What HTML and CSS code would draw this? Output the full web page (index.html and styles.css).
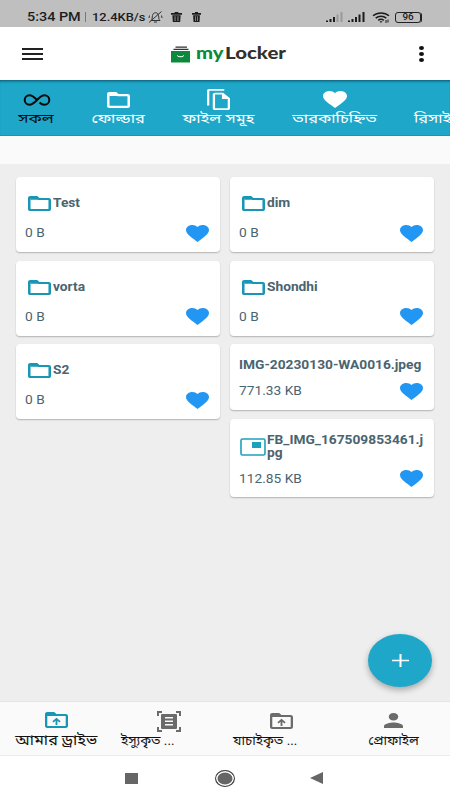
FILE: index.html
```html
<!DOCTYPE html>
<html lang="bn">
<head>
  <meta charset="UTF-8">
  <meta name="viewport" content="width=device-width, initial-scale=1.0">
  <title>myLocker</title>
  <link rel="stylesheet" href="styles.css">
</head>
<body>
  <svg class="sprite">
    <symbol id="folder" viewBox="2 4 20 16" preserveAspectRatio="none"><path d="M9.170 6.200l2 2H19.800v9.600H4.200V6.200h4.970M10 4H4c-1.100 0-1.990.9-1.990 2L2 18c0 1.100.9 2 2 2h16c1.100 0 2-.9 2-2V8c0-1.100-.9-2-2-2h-8l-2-2z"/><path d="M4 5h6l2 3H4z"/></symbol>
    <symbol id="upload" viewBox="2 4 20 16" preserveAspectRatio="none"><path d="M20 6h-8l-2-2H4c-1.100 0-1.990.9-1.990 2L2 18c0 1.100.9 2 2 2h16c1.100 0 2-.9 2-2V8c0-1.100-.9-2-2-2zm0 12H4V8h16v10z"/><path d="M11.200 17h1.600v-4.300l1.700 1.700 1.100-1.100L12 9.700l-3.600 3.600 1.100 1.100 1.700-1.700z"/></symbol>
    <symbol id="heart" viewBox="2 3 20 18.35" preserveAspectRatio="none"><path d="M12 21.35l-1.45-1.32C5.4 15.36 2 12.28 2 8.5 2 5.42 4.42 3 7.5 3c1.74 0 3.41.81 4.5 2.09C13.09 3.81 14.76 3 16.5 3 19.58 3 22 5.42 22 8.5c0 3.78-3.4 6.86-8.55 11.54L12 21.35z"/></symbol>
    <symbol id="trash" viewBox="0 0 12 11" preserveAspectRatio="none"><path d="M4 0h4v1h4v2H0V1h4zM1.5 3.5h9L10 11H2zM4 4.800v5h.8v-5zm3.200 0v5H8v-5z" fill-rule="evenodd"/></symbol>
  </svg>

  <div class="status-bar">
    <span class="clock"><span class="wide">5:34 PM</span></span>
    <span class="divider"></span>
    <span class="speed"><span class="wide">12.4KB/s</span></span>
    <svg class="bell" viewBox="0 0 14 12"><path d="M2.500 9.500h9C10 8.300 10.500 6.500 10 4.500 9.500 2.300 8.500 1.800 7 1.800S4.500 2.300 4 4.500C3.500 6.500 4 8.300 2.500 9.500M5.500 11h3M.5 11.500l12.500-11M1 4.500L.5 7M13 4.500l.5 2.500"/></svg>
    <svg class="trash"><use href="#trash"/></svg>
    <svg class="trash small"><use href="#trash"/></svg>
    <div class="status-right">
      <svg class="signal" viewBox="0 0 17 10"><path d="M0 8.500h2V10H0zM3.500 7h2v3h-2zM7 5h2v5H7z"/><path class="weak" d="M10.500 2.500h2V10h-2zM14.500 0h2v10h-2z"/></svg>
      <svg class="signal second" viewBox="0 0 17 10"><path d="M0 8.500h2V10H0zM3.500 7h2v3h-2zM7 5h2v5H7zM10.500 2.500h2V10h-2zM14.500 0h2v10h-2z"/></svg>
      <svg class="wifi" viewBox="0 0 18 11"><path d="M1 3.800C5.500-.1 12.500-.1 17 3.800M3.700 6.200c3-2.500 7.600-2.500 10.600 0M6.200 8.300c1.700-1.300 3.900-1.300 5.600 0"/><path class="dot" d="M7.500 9.200h3L9 11zM13.500 8h1v3h-1zM15.500 7.500h1v3h-1z"/></svg>
      <span class="battery"><span>96</span></span>
    </div>
  </div>

  <header class="app-bar">
    <div class="menu"><i></i><i></i><i></i></div>
    <svg class="logo" viewBox="0 0 118 24">
      <path class="dark" d="M5.500 4.500h11.500v1.200H5.500zM3.500 6.800h15v1.300h-15z"/>
      <path class="green" d="M1 9h19v11.500H1z"/>
      <path class="slot" d="M7.500 13.300q0 1.400 1.500 1.400h3q1.500 0 1.500-1.400"/>
      <text class="green" x="26" y="16.500" textLength="27.500" lengthAdjust="spacingAndGlyphs">my</text>
      <text class="dark" x="55" y="16.500" textLength="61" lengthAdjust="spacingAndGlyphs">Locker</text>
    </svg>
    <div class="more"><i></i><i></i><i></i></div>
  </header>

  <nav class="tabs">
    <div class="tab all active">
      <svg class="infinity" viewBox="0 0 28 12"><path d="M14 6C10 1.800 8.500 1.200 6.500 1.200a4.800 4.800 0 0 0 0 9.600c2 0 3.500-.6 7.500-4.800s5.500-4.800 7.500-4.800a4.800 4.800 0 0 1 0 9.600c-2 0-3.300-.6-5-2.300"/></svg>
      <span class="wide">সকল</span>
    </div>
    <div class="tab folders">
      <svg class="folder"><use href="#folder"/></svg>
      <span class="wide">ফোল্ডার</span>
    </div>
    <div class="tab files">
      <svg class="copy" viewBox="1 0 20 23" preserveAspectRatio="none"><path d="M16 0H3C1.900 0 1 .9 1 2v16h2V2h13V0zm-1 4l6 6v11c0 1.100-.9 2-2 2H7.990C6.890 23 6 22.100 6 21l.01-15c0-1.100.89-2 1.990-2h7zM14 11V6H8v15h11V11h-5z" fill-rule="evenodd"/></svg>
      <span class="wide">ফাইল সমূহ</span>
    </div>
    <div class="tab starred">
      <svg class="heart"><use href="#heart"/></svg>
      <span class="wide">তারকাচিহ্নিত</span>
    </div>
    <div class="tab recycle">
      <span class="wide">রিসাইকেল</span>
    </div>
  </nav>
  <div class="strip"></div>

  <main class="files-grid">
    <div class="column">
      <div class="card">
        <div class="name"><svg class="folder"><use href="#folder"/></svg><span class="wide">Test</span></div>
        <div class="meta"><span class="wide">0 B</span><svg class="heart"><use href="#heart"/></svg></div>
      </div>
      <div class="card">
        <div class="name"><svg class="folder"><use href="#folder"/></svg><span class="wide">vorta</span></div>
        <div class="meta"><span class="wide">0 B</span><svg class="heart"><use href="#heart"/></svg></div>
      </div>
      <div class="card">
        <div class="name"><svg class="folder"><use href="#folder"/></svg><span class="wide">S2</span></div>
        <div class="meta"><span class="wide">0 B</span><svg class="heart"><use href="#heart"/></svg></div>
      </div>
    </div>
    <div class="column">
      <div class="card">
        <div class="name"><svg class="folder"><use href="#folder"/></svg><span class="wide">dim</span></div>
        <div class="meta"><span class="wide">0 B</span><svg class="heart"><use href="#heart"/></svg></div>
      </div>
      <div class="card">
        <div class="name"><svg class="folder"><use href="#folder"/></svg><span class="wide">Shondhi</span></div>
        <div class="meta"><span class="wide">0 B</span><svg class="heart"><use href="#heart"/></svg></div>
      </div>
      <div class="card plain">
        <div class="name"><span class="wide">IMG-20230130-WA0016.jpeg</span></div>
        <div class="meta"><span class="wide">771.33 KB</span><svg class="heart"><use href="#heart"/></svg></div>
      </div>
      <div class="card image">
        <div class="name">
          <svg class="picture" viewBox="0 0 26 18"><rect class="frame" x="1" y="1" width="24" height="16" rx="1.500"/><path d="M12 4h9v6h-9z"/></svg>
          <span class="wide">FB_IMG_167509853461.j<br>pg</span>
        </div>
        <div class="meta"><span class="wide">112.85 KB</span><svg class="heart"><use href="#heart"/></svg></div>
      </div>
    </div>
    <button class="fab"><svg viewBox="0 0 17 13"><path d="M7.500 0h2v5.750h7.500v1.500H9.500V13h-2V7.250H0v-1.500h7.500z"/></svg></button>
  </main>

  <nav class="bottom-nav">
    <div class="item active">
      <svg class="folder"><use href="#upload"/></svg>
      <span class="wide">আমার ড্রাইভ</span>
    </div>
    <div class="item clipped">
      <svg class="scan" viewBox="0 0 24 21"><path d="M0 0h5v2H2v3H0zM19 0h5v5h-2V2h-3zM0 16h2v3h3v2H0zM22 16h2v5h-5v-2h3z"/><path d="M5 3h14q1 0 1 1v13q0 1-1 1H5q-1 0-1-1V4q0-1 1-1zM8 6v1.500h8V6zM8 9.500V11h8V9.500zM8 13v1.500h8V13z" fill-rule="evenodd"/></svg>
      <span class="wide">ইস্যুকৃত ...</span>
    </div>
    <div class="item clipped">
      <svg class="folder"><use href="#upload"/></svg>
      <span class="wide">যাচাইকৃত ...</span>
    </div>
    <div class="item">
      <svg class="person" viewBox="4 4 16 16" preserveAspectRatio="none"><path d="M12 12c2.210 0 4-1.790 4-4s-1.790-4-4-4-4 1.790-4 4 1.790 4 4 4zm0 2c-2.670 0-8 1.340-8 4v2h16v-2c0-2.660-5.330-4-8-4z"/></svg>
      <span class="wide">প্রোফাইল</span>
    </div>
  </nav>

  <div class="system-nav">
    <span class="recent"></span>
    <span class="home"></span>
    <span class="back"></span>
  </div>
</body>
</html>
```
FILE: styles.css
```css
* {
  box-sizing: border-box;
}
body {
  margin: 0;
  width: 450px;
  height: 800px;
  overflow: hidden;
  display: flex;
  flex-direction: column;
  font-family: Roboto, "Noto Sans Bengali", "Noto Sans", sans-serif;
  background: #eee;
}
svg {
  display: block;
  fill: currentColor;
  flex-shrink: 0;
}
.sprite {
  position: absolute;
  width: 0;
  height: 0;
}
.wide {
  display: inline-block;
  white-space: nowrap;
  transform: scaleX(1.2);
  transform-origin: left center;
}

/* status bar */
.status-bar {
  height: 27px;
  flex-shrink: 0;
  display: flex;
  align-items: center;
  padding: 7px 26px 0 27px;
  background: #bfbfbf;
  color: #1c1c1c;
}
.clock {
  width: 58px;
  font-size: 12px;
  font-weight: 500;
}
.divider {
  width: 1px;
  height: 10px;
  background: #777;
}
.speed {
  width: 62px;
  padding-left: 6px;
  font-size: 11px;
  font-weight: 500;
}
.speed .wide {
  transform: scaleX(1.17);
}
.bell {
  width: 15px;
  height: 12px;
  fill: none;
  stroke: #333;
}
.trash {
  width: 11px;
  height: 10px;
  margin-left: 8px;
}
.trash.small {
  width: 9px;
  margin-left: 10px;
}
.status-right {
  display: flex;
  align-items: center;
  margin-left: auto;
}
.signal {
  width: 17px;
  height: 10px;
}
.signal.second {
  margin-left: 5px;
}
.signal .weak {
  fill: #999;
}
.wifi {
  width: 18px;
  height: 11px;
  margin: 0 5px 0 7px;
  fill: none;
  stroke: #1c1c1c;
  stroke-width: 1.5;
}
.wifi .dot {
  fill: #1c1c1c;
  stroke: none;
}
.battery {
  width: 26px;
  height: 11px;
  margin-right: 3px;
  border: 1px solid #222;
  border-radius: 3px;
  font-size: 9px;
  font-weight: 500;
  line-height: 9.5px;
  text-align: center;
  box-shadow: 1.5px 0 0 -0.5px #222;
}
.battery span {
  display: inline-block;
  transform: scaleX(1.1);
}

/* app bar */
.app-bar {
  height: 53px;
  flex-shrink: 0;
  display: flex;
  align-items: center;
  padding: 0 26px 0 22px;
  background: #fff;
}
.menu {
  width: 21px;
  display: grid;
  gap: 3px;
}
.menu i {
  height: 2px;
  background: #222;
}
.logo {
  width: 118px;
  height: 24px;
  margin-left: 127px;
  font-family: Lato, sans-serif;
  font-size: 17px;
  font-weight: 900;
}
.logo .green {
  fill: #0c8a3c;
}
.logo .dark {
  fill: #2f3132;
}
.logo .slot {
  fill: none;
  stroke: #fff;
}
.more {
  display: grid;
  gap: 2px;
  margin-left: auto;
}
.more i {
  width: 5px;
  height: 4px;
  border-radius: 50%;
  background: #111;
}

/* tabs */
.tabs {
  height: 56px;
  flex-shrink: 0;
  display: flex;
  overflow: hidden;
  background: #1fa7c9;
  border-bottom: 1px solid #1a93b8;
  box-shadow: inset 0 3px 3px -2px #08516a;
  color: #fff;
}
.tab {
  flex-shrink: 0;
  height: 56px;
  display: flex;
  flex-direction: column;
  align-items: center;
  justify-content: flex-end;
  padding-bottom: 8px;
  font-size: 13px;
}
.tab .wide {
  transform: scaleX(1.26);
  transform-origin: center;
  line-height: 18px;
}
.tab.all {
  width: 73px;
}
.tab.folders {
  width: 91px;
}
.tab.files {
  width: 109px;
}
.tab.starred {
  width: 124px;
}
.tab.recycle {
  width: 103px;
}
.tab.active {
  color: #0a0a0a;
  border-bottom: 1px solid #1a84d8;
  padding-bottom: 7px;
}
.infinity {
  width: 28px;
  height: 12px;
  margin-bottom: 4px;
  fill: none;
  stroke: currentColor;
  stroke-width: 2;
}
.tab .folder {
  width: 23px;
  height: 16px;
  margin-bottom: 2px;
}
.copy {
  width: 23px;
  height: 21px;
}
.tab .heart {
  width: 24px;
  height: 17px;
  margin-bottom: 2px;
}
.strip {
  height: 28px;
  flex-shrink: 0;
  background: #fafafa;
}

/* file cards */
.files-grid {
  flex: 1;
  display: flex;
  gap: 10px;
  padding: 13px 16px 0;
  position: relative;
}
.column {
  width: 204px;
  display: flex;
  flex-direction: column;
  gap: 8.6px;
}
.card {
  height: 75px;
  padding: 17px 11px 0 9px;
  border-radius: 4px;
  background: #fff;
  box-shadow: 0 1px 1.5px rgba(0, 0, 0, 0.25);
  color: #4a6470;
}
.card .wide {
  transform: scaleX(1.145);
}
.card .name .wide {
  position: relative;
  top: 1px;
}
.card .name {
  height: 18px;
  display: flex;
  align-items: center;
  font-size: 12px;
  line-height: 13.5px;
  font-weight: 700;
}
.card .folder {
  width: 23px;
  height: 15px;
  margin: 1px 2px 0 3px;
  color: #1797b5;
}
.card .meta {
  height: 18px;
  display: flex;
  align-items: center;
  justify-content: space-between;
  margin-top: 12px;
  font-size: 12px;
}
.card .heart {
  width: 23px;
  height: 17px;
  color: #2196f3;
}
.card.plain {
  height: 66px;
  padding-top: 12px;
}
.card.plain .meta {
  margin-top: 8px;
}
.card.image {
  height: 78px;
  padding-top: 14px;
}
.card.image .name {
  height: 27px;
}
.card.image .meta {
  margin-top: 10px;
}
.picture {
  width: 26px;
  height: 18px;
  margin: 1px 1px 0;
  color: #1ba0be;
}
.picture .frame {
  fill: none;
  stroke: currentColor;
  stroke-width: 1.6;
}
.fab {
  position: absolute;
  right: 18px;
  bottom: 14px;
  width: 64px;
  height: 53px;
  display: flex;
  align-items: center;
  justify-content: center;
  padding: 0;
  border: none;
  border-radius: 50%;
  background: #1fa7c9;
  color: #fff;
  box-shadow: 0 3px 6px rgba(0, 0, 0, 0.3);
}
.fab svg {
  width: 17px;
  height: 13px;
}

/* bottom navigation */
.bottom-nav {
  height: 55px;
  flex-shrink: 0;
  display: flex;
  background: #fafafa;
  border-top: 1px solid #e4e4e4;
  border-bottom: 1px solid #ececec;
}
.bottom-nav .item {
  width: 112.5px;
  display: flex;
  flex-direction: column;
  align-items: center;
  justify-content: flex-end;
  padding-bottom: 5px;
  color: #6b6b6b;
  font-size: 12px;
}
.bottom-nav .wide {
  transform: scaleX(1.12);
  transform-origin: center;
  color: #111;
  line-height: 18px;
}
.bottom-nav .clipped .wide {
  align-self: flex-start;
  margin-left: 8px;
  transform-origin: left center;
}
.bottom-nav .folder {
  width: 23px;
  height: 16px;
  margin-bottom: 3px;
}
.bottom-nav .item.active {
  color: #1797b5;
  font-size: 13.5px;
  padding-bottom: 6px;
}
.bottom-nav .active .wide {
  transform: scaleX(1.2);
}
.scan {
  width: 24px;
  height: 21px;
}
.person {
  width: 19px;
  height: 15px;
  margin-bottom: 4px;
}

/* system navigation */
.system-nav {
  height: 44px;
  flex-shrink: 0;
  display: flex;
  align-items: center;
  padding-left: 125px;
  background: #fff;
}
.recent {
  width: 13px;
  height: 11px;
  background: #666;
}
.home {
  width: 20px;
  height: 17px;
  margin-left: 77px;
  border: 1.5px solid #444;
  border-radius: 50%;
  background: #666;
  box-shadow: inset 0 0 0 1.5px #fff;
}
.back {
  margin-left: 75px;
  border: solid transparent;
  border-width: 6px 13px 6px 0;
  border-right-color: #666;
}
```
